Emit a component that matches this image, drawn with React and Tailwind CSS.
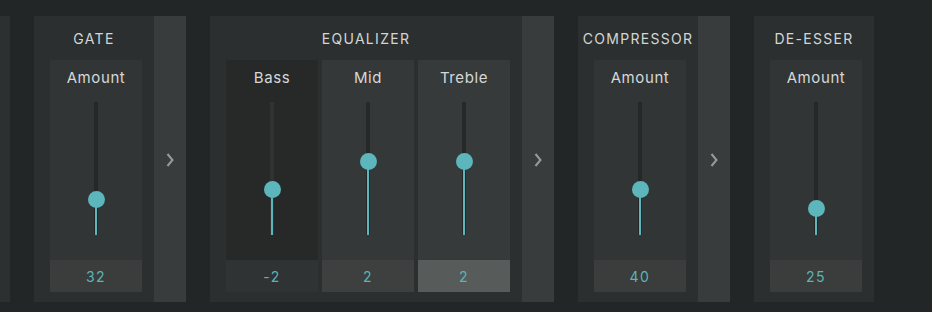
import React from "react";

const font = { fontFamily: "Inter, 'Open Sans', sans-serif" };

function Chevron() {
  return (
    <div className="w-[32px] h-full bg-[#393c3c] flex items-center justify-center">
      <svg width="10" height="16" viewBox="0 0 10 16" className="mt-[2px]">
        <polyline points="2.5,2 7.5,8 2.5,14" fill="none" stroke="#979b9b" strokeWidth="2" />
      </svg>
    </div>
  );
}

function SliderCard({ label, value, thumb, card, box, track }) {
  // thumb: y offset of thumb center from top of track (track is 133px tall)
  return (
    <div className={`w-[92px] h-[232px] flex flex-col ${card}`}>
      <div className="h-[36px] flex items-center justify-center text-[15px] tracking-[0.6px] text-[#d6d8d8]">
        {label}
      </div>
      <div className="h-[164px] pt-[6px]">
        <div className={`relative mx-auto w-[4px] h-[133px] ${track}`}>
          <div
            className="absolute left-[1px] w-[2px] bottom-0 bg-[#5cb6bb]"
            style={{ top: thumb }}
          />
          <div
            className="absolute left-[-6.5px] w-[17px] h-[17px] rounded-full bg-[#5cb6bb]"
            style={{ top: thumb - 8.5 }}
          />
        </div>
      </div>
      <div className={`h-[32px] flex items-center justify-center text-[14px] tracking-[1.5px] text-[#5ab4b8] ${box}`}>
        {value}
      </div>
    </div>
  );
}

function Panel({ title, children }) {
  return (
    <div className="h-full bg-[#2c2f2f] flex flex-col pl-[16px] pr-[12px]">
      <div className="h-[44px] flex items-center justify-center text-[14px] tracking-[1.3px] text-[#d3d6d6] -ml-[16px] -mr-[12px] pt-[1px]">
        {title}
      </div>
      <div className="flex gap-[4px]">{children}</div>
    </div>
  );
}

const normal = { card: "bg-[#323535]", box: "bg-[#3a3d3c]", track: "bg-[#252828]" };

export default function App() {
  return (
    <div className="w-[932px] h-[312px] bg-[#232626] pt-[16px] overflow-hidden" style={font}>
      <div className="flex h-[286px]">
        <div className="w-[10px] h-full bg-[#2d3030]" />
        <div className="w-[24px]" />
        <Panel title="GATE">
          <SliderCard label="Amount" value="32" thumb={97} {...normal} />
        </Panel>
        <Chevron />
        <div className="w-[24px]" />
        <Panel title="EQUALIZER">
          <SliderCard label="Bass" value="-2" thumb={87} card="bg-[#262928]" box="bg-[#303333]" track="bg-[#303333]" />
          <SliderCard label="Mid" value="2" thumb={59} card="bg-[#353838]" box="bg-[#3d403f]" track="bg-[#262928]" />
          <SliderCard label="Treble" value="2" thumb={59} card="bg-[#373a3a]" box="bg-[#575b59]" track="bg-[#262928]" />
        </Panel>
        <Chevron />
        <div className="w-[24px]" />
        <Panel title="COMPRESSOR">
          <SliderCard label="Amount" value="40" thumb={87} {...normal} />
        </Panel>
        <Chevron />
        <div className="w-[24px]" />
        <Panel title="DE-ESSER">
          <SliderCard label="Amount" value="25" thumb={106} {...normal} />
        </Panel>
      </div>
    </div>
  );
}
